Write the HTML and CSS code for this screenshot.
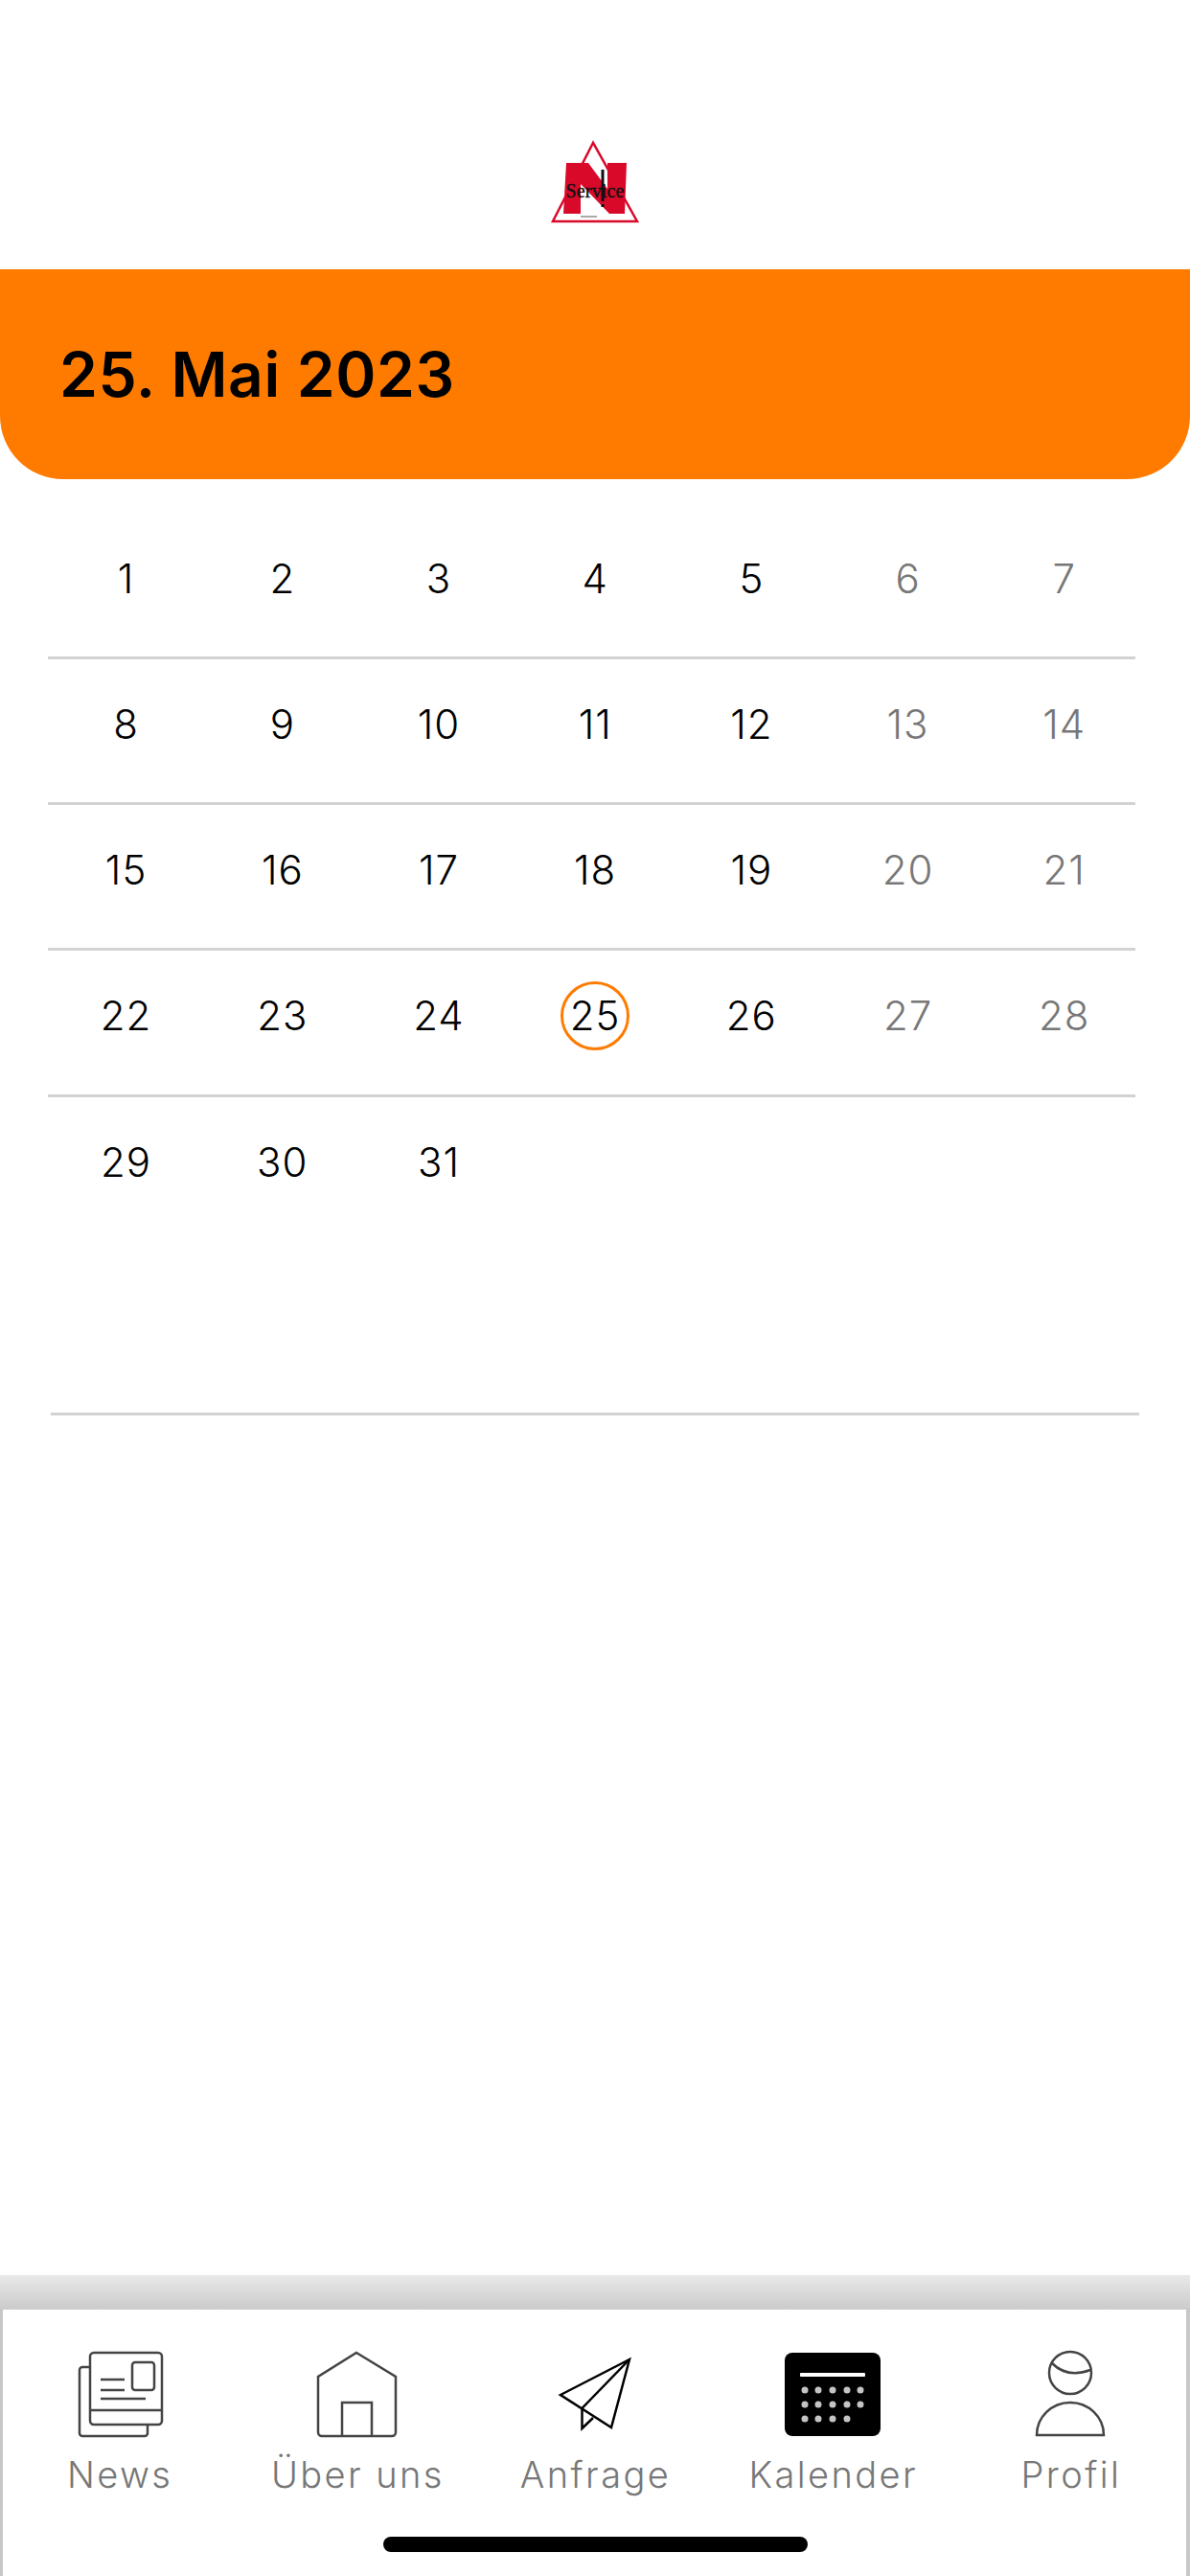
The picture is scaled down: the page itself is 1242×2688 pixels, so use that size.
FILE: index.html
```html
<!DOCTYPE html>
<html lang="de">
<head>
    <meta charset="UTF-8">
    <meta name="viewport" content="width=device-width, initial-scale=1.0">
    <title>Kalender</title>
    <link rel="stylesheet" href="styles.css">
</head>
<body>
    <header class="top-bar">
        <svg class="logo" viewBox="0 0 100 90" width="100" height="90">
            <path class="logo-triangle" d="M48 4 L6 86 H94 Z"/>
            <path class="logo-n" d="M20 25 H43 L63 52 V25 H83 L81 78 H65 L35 47 V78 H17 Z"/>
            <text class="logo-text" x="50" y="61" text-anchor="middle" textLength="61">Service</text>
            <path class="logo-mark" d="M58 32 V65 M58 68 V71"/>
            <path class="logo-small" d="M35 81 H52"/>
        </svg>
    </header>

    <section class="date-banner">
        <h1>25. Mai 2023</h1>
    </section>

    <main class="calendar">
        <div class="week">
            <span class="day">1</span><span class="day">2</span><span class="day">3</span><span class="day">4</span><span class="day">5</span><span class="day off">6</span><span class="day off">7</span>
        </div>
        <div class="week">
            <span class="day">8</span><span class="day">9</span><span class="day">10</span><span class="day">11</span><span class="day">12</span><span class="day off">13</span><span class="day off">14</span>
        </div>
        <div class="week">
            <span class="day">15</span><span class="day">16</span><span class="day">17</span><span class="day">18</span><span class="day">19</span><span class="day off">20</span><span class="day off">21</span>
        </div>
        <div class="week">
            <span class="day">22</span><span class="day">23</span><span class="day">24</span><span class="day today">25</span><span class="day">26</span><span class="day off">27</span><span class="day off">28</span>
        </div>
        <div class="week last">
            <span class="day">29</span><span class="day">30</span><span class="day">31</span>
        </div>
        <div class="calendar-end"></div>
    </main>

    <div class="tab-shadow"></div>
    <nav class="tabs">
        <a class="tab">
            <svg class="icon" viewBox="0 0 104 92">
                <path d="M21 18 H13 a3 3 0 0 0 -3 3 V87 a3 3 0 0 0 3 3 H78 a3 3 0 0 0 3 -3 V78"/>
                <rect x="21" y="3" width="75" height="75" rx="4"/>
                <rect x="65" y="13" width="23" height="29" rx="3"/>
                <path d="M32 31 H57 M32 42 H57 M32 51 H79 M21 63 H96"/>
            </svg>
            <span>News</span>
        </a>
        <a class="tab">
            <svg class="icon" viewBox="0 0 104 92">
                <path d="M51 3 L92 28 V86 a4 4 0 0 1 -4 4 H15 a4 4 0 0 1 -4 -4 V28 Z"/>
                <path d="M36 90 V55 H67 V90"/>
            </svg>
            <span>Über uns</span>
        </a>
        <a class="tab">
            <svg class="icon icon-dark" viewBox="0 0 104 92">
                <path d="M87 10 L15 47 L68 81 Z"/>
                <path d="M87 10 L37.5 61 V82 L49 71"/>
            </svg>
            <span>Anfrage</span>
        </a>
        <a class="tab">
            <svg class="icon icon-filled" viewBox="0 0 104 92">
                <rect x="1" y="3" width="100" height="87" rx="8"/>
                <rect class="cal-bar" x="17" y="24" width="68" height="4" rx="1"/>
                <g class="cal-dots">
                    <circle cx="22" cy="42" r="3.5"/><circle cx="36" cy="42" r="3.5"/><circle cx="51" cy="42" r="3.5"/><circle cx="66" cy="42" r="3.5"/><circle cx="80" cy="42" r="3.5"/>
                    <circle cx="22" cy="57" r="3.5"/><circle cx="36" cy="57" r="3.5"/><circle cx="51" cy="57" r="3.5"/><circle cx="66" cy="57" r="3.5"/><circle cx="80" cy="57" r="3.5"/>
                    <circle cx="22" cy="72" r="3.5"/><circle cx="36" cy="72" r="3.5"/><circle cx="51" cy="72" r="3.5"/><circle cx="66" cy="72" r="3.5"/>
                </g>
            </svg>
            <span>Kalender</span>
        </a>
        <a class="tab">
            <svg class="icon" viewBox="0 0 104 92">
                <circle cx="51" cy="24" r="22"/>
                <path d="M32 14 Q48 30 72 21"/>
                <path d="M16 89 A35 34 0 0 1 86 89 Z"/>
            </svg>
            <span>Profil</span>
        </a>
        <div class="home-bar"></div>
    </nav>
</body>
</html>
```

FILE: styles.css
```css
* {
    box-sizing: border-box;
}

body {
    margin: 0;
    height: 2688px;
    display: flex;
    flex-direction: column;
    background-color: #fff;
    color: #000;
    font-family: Inter, "Open Sans", sans-serif;
    overflow: hidden;
}

/* logo bar */
.top-bar {
    height: 281px;
    display: flex;
    justify-content: center;
    align-items: flex-end;
    padding-bottom: 46px;
}

.logo-triangle {
    fill: #fff;
    stroke: #d9092a;
    stroke-width: 2.5;
}

.logo-n {
    fill: #d9092a;
}

.logo-text {
    font-family: "Liberation Serif", serif;
    font-size: 20px;
    fill: #111;
    stroke: #111;
    stroke-width: 0.4;
}

.logo-mark {
    fill: none;
    stroke: #111;
    stroke-width: 3;
}

.logo-small {
    stroke: #555;
    stroke-width: 1;
}

/* orange date banner */
.date-banner {
    height: 219px;
    padding: 0 0 0 62px;
    display: flex;
    align-items: center;
    background-color: #ff7b00;
    border-radius: 0 0 66px 66px;
}

.date-banner h1 {
    margin: 0;
    font-size: 64px;
    font-weight: 600;
    letter-spacing: 0.65px;
}

/* month grid */
.calendar {
    flex: 1;
    padding: 33px 0 0 50px;
}

.week {
    display: grid;
    grid-template-columns: repeat(7, 163.2px);
    width: 1135px;
    height: 152.4px;
    border-bottom: 3px solid #d2d2d2;
    align-items: start;
    padding-top: 31.5px;
}

.week:first-child {
    height: 154.5px;
    padding-top: 34px;
}

.week.last {
    height: 329px;
    border-bottom: none;
}

.calendar-end {
    width: 1136px;
    margin-left: 3px;
    border-top: 3px solid #d2d2d2;
}

.day {
    justify-self: center;
    width: 72px;
    height: 72px;
    display: flex;
    justify-content: center;
    align-items: center;
    font-size: 42px;
    font-weight: 300;
    letter-spacing: 1px;
}

.day.off {
    color: #777;
}

.day.today {
    border: 3.5px solid #ff7b00;
    border-radius: 50%;
}

/* bottom tabs */
.tab-shadow {
    height: 36px;
    background: linear-gradient(#e9e9e9, #cbcbcb);
}

.tabs {
    position: relative;
    height: 278px;
    display: flex;
    padding: 42px 0 0 1px;
    box-shadow: inset 3px 0 #c8c8c8, inset -4px 0 #c8c8c8;
}

.tab {
    flex: 1;
    display: flex;
    flex-direction: column;
    align-items: center;
    color: #777;
    font-size: 38px;
    font-weight: 300;
    letter-spacing: 2.4px;
}

.tab span {
    margin-top: 14px;
    line-height: 48px;
}

.icon {
    width: 104px;
    height: 92px;
    fill: none;
    stroke: #444;
    stroke-width: 2.5;
}

.icon-dark {
    stroke: #000;
    stroke-width: 2.5;
}

.icon-filled {
    fill: #000;
    stroke: none;
}

.cal-bar {
    fill: #fff;
}

.cal-dots {
    fill: #c4c4c4;
}

.home-bar {
    position: absolute;
    left: 400px;
    bottom: 25px;
    width: 443px;
    height: 16px;
    border-radius: 8px;
    background-color: #000;
}
```
